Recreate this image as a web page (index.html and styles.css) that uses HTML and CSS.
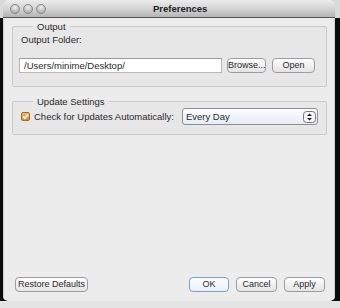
FILE: index.html
```html
<!DOCTYPE html>
<html>
<head>
	<meta charset="utf-8">
	<title>Preferences</title>
	<link rel="stylesheet" href="styles.css">
</head>
<body>
	<div class="window">
		<div class="titlebar">
			<span class="lights">
				<i class="light"></i><i class="light"></i><i class="light"></i>
			</span>
			<span class="titlebar__txt">Preferences</span>
		</div>

		<div class="content">
			<fieldset class="group group_output">
				<legend class="group__legend">Output</legend>
				<div class="group__label">Output Folder:</div>
				<div class="folder">
					<div class="field">/Users/minime/Desktop/</div>
					<button class="btn btn_browse">Browse...</button>
					<button class="btn btn_open">Open</button>
				</div>
			</fieldset>

			<fieldset class="group group_update">
				<legend class="group__legend">Update Settings</legend>
				<div class="check-row">
					<span class="check">
						<svg width="7" height="7" viewBox="0 0 7 7"><path d="M1 3.6 L2.8 5.3 L6 1.4" fill="none" stroke="#fff" stroke-width="1.5"/></svg>
					</span>
					<span class="check__txt">Check for Updates Automatically:</span>
					<div class="select">
						<span class="select__txt">Every Day</span>
						<span class="select__arrows">
							<svg width="13" height="12" viewBox="0 0 13 12">
								<rect x="0.5" y="0.5" width="12" height="11" rx="3" fill="#f4f4f4" stroke="#777"/>
								<path d="M4 5 L6.5 2.5 L9 5 Z M4 7 L6.5 9.5 L9 7 Z" fill="#222"/>
							</svg>
						</span>
					</div>
				</div>
			</fieldset>

			<div class="actions">
				<button class="btn btn_restore">Restore Defaults</button>
				<div class="actions__right">
					<button class="btn btn_ok">OK</button>
					<button class="btn btn_cancel">Cancel</button>
					<button class="btn btn_apply">Apply</button>
				</div>
			</div>
		</div>
	</div>
</body>
</html>
```

FILE: styles.css
```css
html {
	background: linear-gradient(#d9d9d9 0, #d9d9d9 18px, #0c0c0c 18px, #0c0c0c 301px, #e4e4e4 301px);
}

body {
	margin: 0;
	width: 340px;
	height: 308px;
	overflow: hidden;
	font-size: 9.5px;
	font-family: "Liberation Sans", Arial, sans-serif;
	color: #2a2a2a;
}


.window {
	width: 332px;
	height: 301px;
	margin-left: 3px;
	display: flex;
	flex-direction: column;
	background-color: #ececec;
	border-radius: 6px 6px 5px 5px;
	overflow: hidden;
}
	.titlebar {
		height: 17px;
		flex: none;
		display: flex;
		align-items: center;
		position: relative;
		background: linear-gradient(#ececec, #d2d2d2 55%, #b4b4b4);
		border-bottom: 1px solid #555;
	}
		.lights {
			display: flex;
			gap: 3px;
			margin-left: 7px;
		}
			.light {
				width: 10px;
				height: 10px;
				border-radius: 50%;
				border: 1px solid #8a8a8a;
				box-sizing: border-box;
				background: radial-gradient(circle at 50% 30%, #f2f2f2, #bcbcbc 60%, #9a9a9a);
			}
		.titlebar__txt {
			font-weight: bold;
			font-size: 9.5px;
			margin-left: 107px;
			color: #222;
		}

	.content {
		flex: 1;
		display: flex;
		flex-direction: column;
		padding: 3px 7px 9px 8px;
		border-left: 1px solid #cfcfcf;
		border-right: 1px solid #cfcfcf;
	}


.group {
	margin: 0;
	border: 1px solid #cacaca;
	background-color: #e7e7e7;
	border-radius: 2px;
	padding: 0 6px;
}
	.group__legend {
		margin-left: 14px;
		padding: 0 4px;
		line-height: 11px;
		color: #2a2a2a;
	}

	.group_output {
		padding-bottom: 13px;
	}
		.group__label {
			margin-top: 2px;
			margin-left: 2px;
			line-height: 12px;
		}

		.folder {
			display: flex;
			align-items: center;
			margin-top: 12px;
		}
			.field {
				width: 197px;
				height: 13px;
				line-height: 13px;
				padding-left: 4px;
				border: 1px solid #b8b8b8;
				border-top-color: #9a9a9a;
				background-color: #fff;
				color: #2a2a2a;
			}

	.group_update {
		margin-top: 9px;
		padding-bottom: 9px;
	}
		.check-row {
			display: flex;
			align-items: center;
			margin-top: 1px;
		}
			.check {
				width: 7px;
				height: 7px;
				margin-left: 2px;
				display: flex;
				border: 1px solid #a0682a;
				border-radius: 2px;
				background: linear-gradient(#f3b966, #d98a2e);
			}
			.check__txt {
				margin-left: 4px;
			}

			.select {
				margin-left: 8px;
				width: 134px;
				height: 15px;
				display: flex;
				align-items: center;
				justify-content: space-between;
				border: 1px solid #8f8f8f;
				border-radius: 3px;
				background: linear-gradient(#fbfcfe, #e6edf7);
			}
				.select__txt {
					margin-left: 3px;
				}
				.select__arrows {
					display: flex;
					margin-right: 1px;
				}


.btn {
	font: inherit;
	font-size: 9px;
	color: #2a2a2a;
	height: 15px;
	padding: 0 2px;
	line-height: 13px;
	border: 1px solid #9d9d9d;
	border-radius: 4px;
	background: linear-gradient(#ffffff, #f0f0f0 50%, #e4e4e4);
}
	.btn_browse { margin-left: 5px; padding: 0; width: 39px; }
	.btn_open { margin-left: 6px; width: 43px; }

	.btn_ok {
		width: 40px;
		border-color: #7f9fc8;
		background: linear-gradient(#fbfdff, #e9f0f9);
	}
	.btn_cancel { width: 41px; }
	.btn_apply { width: 41px; }

.actions {
	margin-top: auto;
	display: flex;
	align-items: center;
	justify-content: space-between;
	padding: 0 2px 0 3px;
}
	.actions__right {
		display: flex;
		gap: 7px;
	}
```
